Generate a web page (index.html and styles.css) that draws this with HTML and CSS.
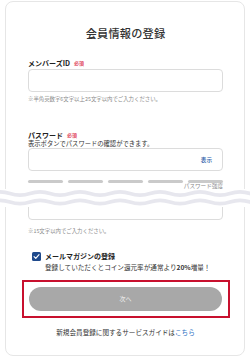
FILE: index.html
```html
<!DOCTYPE html>
<html lang="ja">
<head>
<meta charset="utf-8">
<title>会員情報の登録</title>
<link rel="stylesheet" href="styles.css">
</head>
<body>
<div class="page">
  <div class="card">
    <h1 class="title">会員情報の登録</h1>

    <div class="field field-id">
      <div class="label">メンバーズID<span class="req">必須</span></div>
      <div class="input"></div>
      <p class="hint">※半角英数字6文字以上25文字以内でご入力ください。</p>
    </div>

    <div class="field field-pw">
      <div class="label">パスワード<span class="req">必須</span></div>
      <p class="desc">表示ボタンでパスワードの確認ができます。</p>
      <div class="input input-pw"><span class="show">表示</span></div>
      <div class="bars">
        <span class="bar"></span><span class="bar"></span><span class="bar"></span><span class="bar"></span><span class="bar"></span>
      </div>
      <p class="strength">パスワード強度</p>
    </div>

    <div class="field field-pw2">
      <div class="input input-short"></div>
      <p class="hint">※15文字以内でご入力ください。</p>
    </div>

    <div class="mail">
      <span class="check">
        <svg viewBox="0 0 10 10" width="9" height="9"><path d="M2.3 5.2 L4.2 7 L7.8 3" fill="none" stroke="#fff" stroke-width="1.3" stroke-linecap="round" stroke-linejoin="round"/></svg>
      </span>
      <div class="mail-text">
        <div class="mail-title">メールマガジンの登録</div>
        <div class="mail-desc">登録していただくとコイン還元率が通常より<b>20%</b>増量！</div>
      </div>
    </div>

    <div class="highlight">
      <button class="next" type="button">次へ</button>
    </div>

    <p class="guide">新規会員登録に関するサービスガイドは<a class="link" href="#">こちら</a></p>
  </div>

  <svg class="wave" viewBox="0 0 250 22" width="250" height="22" preserveAspectRatio="none">
    <rect x="0" y="2" width="250" height="18" fill="#fff"/>
    <path d="M-10 6.5 Q0 3.2 10 6.5 T30 6.5 T50 6.5 T70 6.5 T90 6.5 T110 6.5 T130 6.5 T150 6.5 T170 6.5 T190 6.5 T210 6.5 T230 6.5 T250 6.5 T270 6.5" fill="none" stroke="#e7e7ee" stroke-width="3.6"/>
    <path d="M-10 15 Q0 11.7 10 15 T30 15 T50 15 T70 15 T90 15 T110 15 T130 15 T150 15 T170 15 T190 15 T210 15 T230 15 T250 15 T270 15" fill="none" stroke="#e7e7ee" stroke-width="3.6"/>
  </svg>
</div>
</body>
</html>
```

FILE: styles.css
```css
* {
  box-sizing: border-box;
}

html, body {
  margin: 0;
  padding: 0;
  background: #fff;
}

body {
  font-family: "Noto Sans CJK JP", "Noto Sans", sans-serif;
  color: #333;
  width: 250px;
  height: 360px;
  overflow: hidden;
}

.page {
  position: relative;
  width: 250px;
  height: 360px;
  padding-top: 1px;
}

.card {
  margin-left: 5px;
  width: 240px;
  border: 1px solid #e6e6e6;
  border-radius: 8px;
  padding: 23px 21px 18px 22px;
  background: #fff;
}

.title {
  margin: 0;
  font-size: 11.2px;
  line-height: 16px;
  font-weight: 500;
  text-align: center;
  color: #333;
  letter-spacing: 0.2px;
}

.field-id {
  margin-top: 17px;
}

.label {
  font-size: 7px;
  line-height: 10px;
  font-weight: 700;
  color: #222;
  display: flex;
  align-items: center;
}

.req {
  font-size: 5px;
  line-height: 10px;
  font-weight: 700;
  color: #e0445c;
  margin-left: 4px;
}

.input {
  margin-top: 1px;
  height: 23px;
  border: 1px solid #dcdcdc;
  border-radius: 4px;
  background: #fff;
}

.hint {
  margin: 3px 0 0;
  font-size: 5.4px;
  line-height: 8px;
  color: #8a8a8a;
}

.field-pw {
  margin-top: 27px;
}

.field-pw .label {
  line-height: 9px;
}

.desc {
  margin: 0;
  font-size: 6.3px;
  line-height: 8px;
  color: #333;
}

.input-pw {
  margin-top: 0;
  display: flex;
  align-items: center;
  justify-content: flex-end;
  padding-right: 10px;
}

.show {
  font-size: 5.6px;
  line-height: 8px;
  color: #2a5ca8;
  font-weight: 500;
}

.bars {
  margin-top: 9px;
  display: flex;
  gap: 4.5px;
}

.bar {
  flex: 1;
  height: 3px;
  border-radius: 1.5px;
  background: #cacaca;
}

.strength {
  margin: 0;
  font-size: 5.6px;
  line-height: 7px;
  text-align: right;
  color: #888;
}

.field-pw2 {
  margin-top: 8px;
}

.input-short {
  height: 22px;
}

.field-pw2 .hint {
  margin-top: 7px;
}

.mail {
  margin-top: 16px;
  display: flex;
  align-items: flex-start;
  padding-left: 4px;
}

.check {
  width: 9px;
  height: 9px;
  margin-top: 1px;
  margin-right: 4px;
  border-radius: 1.5px;
  background: #1f4a8c;
  display: flex;
  align-items: center;
  justify-content: center;
}

.check svg {
  display: block;
}

.mail-title {
  font-size: 7px;
  line-height: 10px;
  font-weight: 700;
  color: #222;
}

.mail-desc {
  margin-top: 1px;
  font-size: 6.6px;
  line-height: 10px;
  color: #333;
}

.mail-desc b {
  font-weight: 700;
}

.highlight {
  margin: 8px -7px 0 -6px;
  border: 2px solid #c8102e;
  padding: 5px 6px 5px 5px;
}

.next {
  display: block;
  width: 100%;
  height: 24px;
  border: none;
  border-radius: 12px;
  background: #a8a8a8;
  color: #f2f2f2;
  font-family: inherit;
  font-size: 6px;
  line-height: 24px;
  padding: 0;
}

.guide {
  margin: 9px 0 0;
  font-size: 6.6px;
  line-height: 10px;
  text-align: center;
  color: #333;
}

.link {
  color: #2a6fc2;
  text-decoration: none;
}

.wave {
  position: absolute;
  left: 0;
  top: 187px;
  display: block;
}
```
